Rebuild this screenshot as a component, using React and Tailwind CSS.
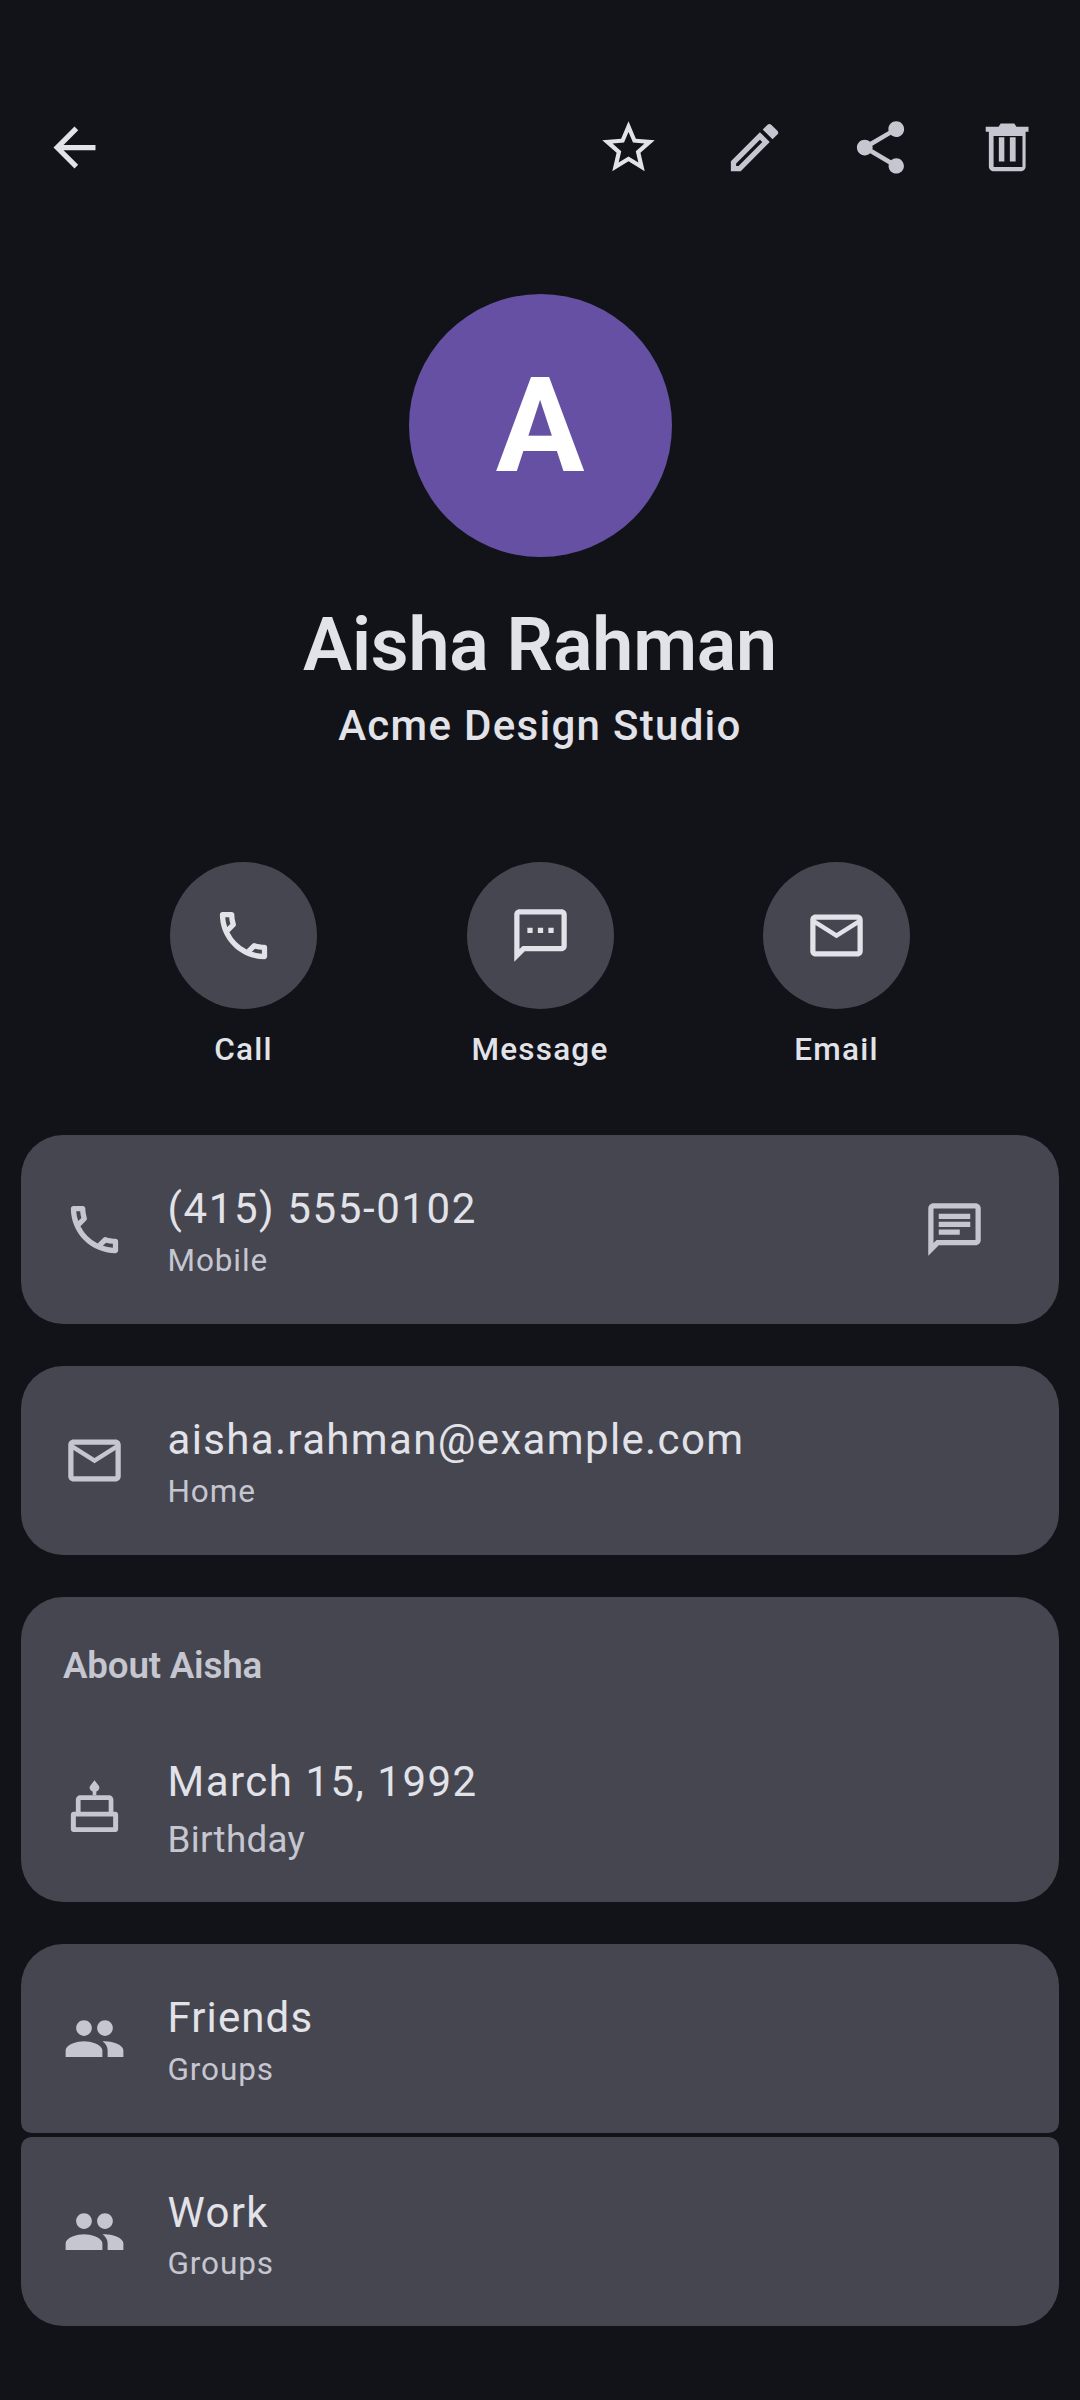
import React from "react";
import { MdArrowBack, MdStarBorder, MdOutlineEdit, MdShare, MdOutlineCall, MdOutlineSms, MdMailOutline, MdOutlineChat, MdPeople } from "react-icons/md";

function Trash({ className }) {
  return (
    <svg viewBox="0 0 24 24" fill="currentColor" className={className}>
      <path fillRule="evenodd" d="M8.6 4.1 9.4 2.9h5.2l.8 1.2H20V6H3.7V4.1zM4.9 6h14v13.2c0 1-.8 1.8-1.8 1.8H6.7c-1 0-1.8-.8-1.8-1.8zm1.8 1.6v11.8h11V7.6zM8.7 8.1h2.1v9.2H8.7zM12.9 8.1h2.2v9.2h-2.2z" />
    </svg>
  );
}

function Cake({ className }) {
  return (
    <svg viewBox="0 0 24 24" fill="currentColor" className={className}>
      <path d="M12 2l1.7 2.2c.5 1-.4 2-1 2.1v1.4h-1.4V6.3c-.7-.2-1.5-1.1-1-2.1z" />
      <path fillRule="evenodd" d="M6.6 7.7h10.9c.9 0 1.7.8 1.7 1.7V14h.8c.5 0 1 .5 1 1v5.7c0 .6-.4 1-1 1H4c-.6 0-1-.4-1-1V15c0-.5.5-1 1-1h.9V9.4c0-.9.8-1.7 1.7-1.7zm.1 1.8V14h10.7V9.5zM4.9 15.8v4.1h14.2v-4.1z" />
    </svg>
  );
}

function Row({ icon: Icon, title, sub, trailing: Trailing, titleTrack = "tracking-[1.35px]", subSize = "text-[31.5px] leading-[42px] tracking-[0.9px]", gap = "mt-[3px]", nudge = "pt-[3px]" }) {
  return (
    <div className="flex items-center pl-[42px] pr-[73px]">
      <Icon className="w-[63px] h-[63px] text-[#c5c6d0] shrink-0" />
      <div className={`ml-[41.5px] flex-1 flex flex-col ${nudge}`}>
        <div className={`text-[42px] leading-[56px] ${titleTrack} text-[#e2e2e9]`}>{title}</div>
        <div className={`${subSize} ${gap} text-[#c5c6d0]`}>{sub}</div>
      </div>
      {Trailing && <Trailing className="w-[63px] h-[63px] text-[#c5c6d0] shrink-0" />}
    </div>
  );
}

function Action({ icon: Icon, label }) {
  return (
    <div className="flex flex-col items-center w-[147px]">
      <div className="w-[147px] h-[147px] rounded-full bg-[#454650] flex items-center justify-center">
        <Icon className="w-[63px] h-[63px] text-[#e2e2e9]" />
      </div>
      <div className="mt-[17px] whitespace-nowrap text-[31.5px] leading-[48px] font-medium tracking-[1.2px] text-[#e2e2e9]">{label}</div>
    </div>
  );
}

export default function App() {
  return (
    <div className="w-[1080px] h-[2400px] bg-[#111318] overflow-hidden font-['Roboto',sans-serif]">
      <div className="flex items-center h-[126px] mt-[84px] pl-[11px] pr-[10px]">
        <div className="w-[126px] h-[126px] flex items-center justify-center text-[#e2e2e9]">
          <MdArrowBack className="w-[63px] h-[63px]" />
        </div>
        <div className="flex-1" />
        <div className="w-[126px] h-[126px] flex items-center justify-center text-[#e2e2e9]">
          <MdStarBorder className="w-[63px] h-[63px]" />
        </div>
        <div className="w-[126px] h-[126px] flex items-center justify-center text-[#c5c6d0]">
          <MdOutlineEdit className="w-[63px] h-[63px]" />
        </div>
        <div className="w-[126px] h-[126px] flex items-center justify-center text-[#c5c6d0]">
          <MdShare className="w-[63px] h-[63px]" />
        </div>
        <div className="w-[126px] h-[126px] flex items-center justify-center text-[#c5c6d0] ml-[1px]">
          <Trash className="w-[63px] h-[63px]" />
        </div>
      </div>

      <div className="flex flex-col items-center">
        <div className="mt-[84px] w-[263px] h-[263px] rounded-full bg-[#6650a4] flex items-center justify-center text-white font-bold text-[132px] leading-none">A</div>
        <div className="mt-[46px] text-[73.5px] leading-[84px] font-semibold tracking-[-0.2px] text-[#e2e2e9]">Aisha Rahman</div>
        <div className="mt-[14px] text-[42px] leading-[50px] font-medium tracking-[1.3px] text-[#e2e2e9]">Acme Design Studio</div>
      </div>

      <div className="mt-[111px] pl-[170px] flex gap-[149.5px]">
        <Action icon={MdOutlineCall} label="Call" />
        <Action icon={MdOutlineSms} label="Message" />
        <Action icon={MdMailOutline} label="Email" />
      </div>

      <div className="mt-[61px] mx-[21px] flex flex-col">
        <div className="h-[189px] rounded-[42px] bg-[#454650] flex flex-col justify-center">
          <Row icon={MdOutlineCall} title="(415) 555-0102" sub="Mobile" trailing={MdOutlineChat} titleTrack="tracking-[1.6px]" />
        </div>
        <div className="mt-[42px] h-[189px] rounded-[42px] bg-[#454650] flex flex-col justify-center">
          <Row icon={MdMailOutline} title="aisha.rahman@example.com" sub="Home" />
        </div>
        <div className="mt-[42px] h-[305px] rounded-[42px] bg-[#454650] flex flex-col">
          <div className="mt-[48px] mb-[65px] pl-[42px] text-[36.75px] leading-[42px] font-semibold tracking-[-0.2px] text-[#c5c6d0]">About Aisha</div>
          <Row icon={Cake} title="March 15, 1992" sub="Birthday" titleTrack="tracking-[1.5px]" subSize="text-[36.75px] leading-[42px] tracking-[0.3px]" gap="mt-[9px]" nudge="pt-[2px]" />
        </div>
        <div className="mt-[42px] h-[189px] rounded-t-[42px] rounded-b-[10.5px] bg-[#454650] flex flex-col justify-center">
          <Row icon={MdPeople} title="Friends" sub="Groups" titleTrack="tracking-[1.1px]" />
        </div>
        <div className="mt-[4px] h-[189px] rounded-b-[42px] rounded-t-[10.5px] bg-[#454650] flex flex-col justify-center">
          <Row icon={MdPeople} title="Work" sub="Groups" nudge="pt-[7px]" gap="mt-[2px]" />
        </div>
      </div>
    </div>
  );
}
